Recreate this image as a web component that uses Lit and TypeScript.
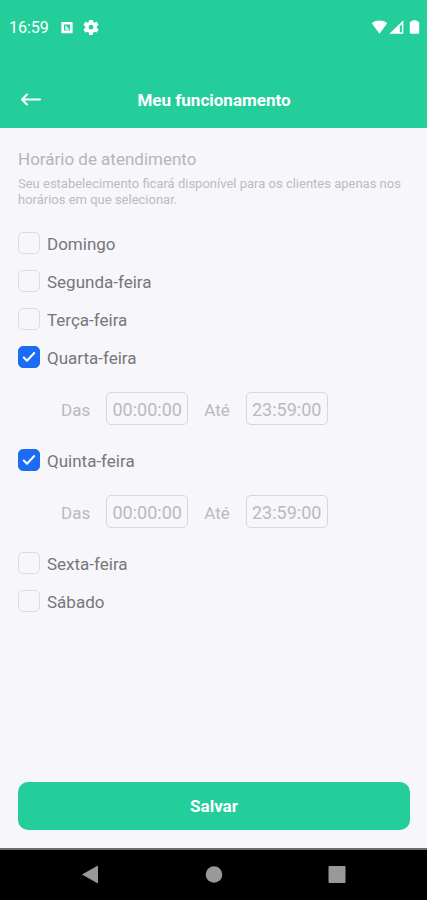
import { LitElement, html, css, nothing } from "lit";
import { customElement, state } from "lit/decorators.js";

interface Day {
  id: string;
  name: string;
  open: boolean;
  from: string;
  to: string;
}

const day = (id: string, name: string, open = false): Day => ({
  id,
  name,
  open,
  from: "00:00:00",
  to: "23:59:00",
});

@customElement("status-bar")
export class StatusBar extends LitElement {
  static styles = css`
    :host {
      display: flex;
      align-items: center;
      height: 56px;
      padding: 0 7px 0 9px;
      color: #fff;
      font: 16px/20px Roboto, sans-serif;
    }
    .time {
      margin-right: 10px;
    }
    .left {
      width: 16px;
      height: 16px;
      margin-right: 8px;
    }
    .space {
      flex: 1;
    }
    svg {
      display: block;
      fill: currentColor;
    }
  `;

  render() {
    return html`
      <span class="time">16:59</span>
      <svg class="left" viewBox="0 0 16 16">
        <path
          fill-rule="evenodd"
          d="M3 2h10q.6 0 .6.600v10q0 .6-.6.600H3q-.6 0-.6-.6v-10Q2.400 2 3 2zM5 4.600v6h6v-6z"
        />
        <path d="M6.300 5.200L10.600 9.800H6.300z" />
      </svg>
      <svg class="left" viewBox="2 3 20 20">
        <path
          d="M19.140 12.940c.04-.3.060-.61.060-.94 0-.32-.02-.64-.07-.94l2.030-1.580c.18-.14.230-.41.120-.61l-1.920-3.320c-.12-.22-.37-.29-.59-.22l-2.390.96c-.5-.38-1.030-.7-1.620-.94l-.36-2.540c-.04-.24-.24-.41-.48-.41h-3.840c-.24 0-.43.170-.47.410l-.36 2.540c-.59.240-1.130.570-1.620.940l-2.390-.96c-.22-.08-.47 0-.59.220L2.740 8.870c-.12.210-.08.470.120.610l2.030 1.580c-.05.300-.09.630-.09.940s.02.640.070.940l-2.030 1.580c-.18.140-.23.410-.12.610l1.920 3.320c.12.220.37.290.59.220l2.390-.96c.5.380 1.030.700 1.620.940l.36 2.540c.05.240.24.410.48.410h3.840c.24 0 .44-.17.470-.41l.36-2.540c.59-.24 1.130-.56 1.620-.94l2.390.96c.22.080.47 0 .59-.22l1.920-3.320c.12-.22.070-.47-.12-.61l-2.010-1.580zM12 15a3 3 0 1 1 0-6 3 3 0 0 1 0 6z"
        />
      </svg>
      <span class="space"></span>
      <svg width="49" height="16" viewBox="0 0 49 16">
        <path d="M0.800 3.300C3 1.200 5.500.5 8.500.5s5.500.700 7.700 2.800L8.500 13.800z" />
        <path
          fill-rule="evenodd"
          d="M18.300 13.800L32.300.3v13.500zM28.800 6.200v6h2.100V4.200z"
        />
        <path
          d="M41 1.500V1q0-.8.800-.8h3.400q.8 0 .8.800v.5h1q1.200 0 1.200 1.200v9.900q0 1.200-1.200 1.200h-7q-1.200 0-1.200-1.200V2.700q0-1.200 1.200-1.200z"
        />
      </svg>
    `;
  }
}

@customElement("system-nav")
export class SystemNav extends LitElement {
  static styles = css`
    :host {
      display: flex;
      justify-content: center;
      align-items: center;
      gap: 98px;
      height: 52px;
      border-top: 2px solid #6c6c6f;
      box-sizing: border-box;
      background: #000;
    }
    button {
      padding: 0;
      border: 0;
      background: none;
      color: #999;
    }
    svg {
      display: block;
      width: 26px;
      height: 24px;
      fill: currentColor;
    }
  `;

  render() {
    return html`
      <button aria-label="Voltar">
        <svg viewBox="0 0 26 24"><path d="M5 11.500L20 3q1-.5 1 .5v16q0 1-1 .5z" /></svg>
      </button>
      <button aria-label="Início">
        <svg viewBox="0 0 26 24"><circle cx="13" cy="11.500" r="8.300" /></svg>
      </button>
      <button aria-label="Recentes">
        <svg viewBox="0 0 26 24"><rect x="3.500" y="3" width="17" height="17" rx="1" /></svg>
      </button>
    `;
  }
}

@customElement("app-root")
export class AppRoot extends LitElement {
  static styles = css`
    :host {
      display: flex;
      flex-direction: column;
      min-height: 100vh;
      background: #f6f6fb;
      color: #77777a;
      font: 17px/22px Roboto, sans-serif;
    }
    header {
      background: #23ce9b;
      color: #fff;
    }
    .bar {
      display: grid;
      grid-template-columns: 24px 1fr 24px;
      align-items: center;
      height: 56px;
      padding: 0 18px 0 19px;
      margin-top: 16px;
    }
    h1 {
      margin: 0;
      text-align: center;
      font-size: 17px;
      font-weight: 700;
    }
    button {
      border: 0;
      padding: 0;
      color: inherit;
      font: inherit;
      cursor: pointer;
    }
    .back {
      background: none;
    }
    .back svg {
      display: block;
      width: 24px;
      height: 24px;
    }
    .stroke {
      fill: none;
      stroke: #fff;
      stroke-width: 2;
      stroke-linecap: round;
      stroke-linejoin: round;
    }
    main {
      flex: 1;
      display: flex;
      flex-direction: column;
      padding: 20px 17px 18px 18px;
    }
    h2 {
      margin: 0 0 6px;
      color: #b5b5b9;
      font-size: 17px;
      font-weight: 400;
    }
    .hint {
      margin: 0 0 24px;
      color: #bcbcc0;
      font-size: 13px;
      line-height: 16px;
    }
    .days {
      display: flex;
      flex-direction: column;
      gap: 16px;
      margin-bottom: 32px;
    }
    .day {
      display: flex;
      align-items: center;
      gap: 7px;
      height: 22px;
    }
    .box {
      display: grid;
    }
    .box > * {
      grid-area: 1 / 1;
    }
    .box input {
      appearance: none;
      width: 22px;
      height: 22px;
      margin: 0;
      border: 1px solid #dcdce1;
      border-radius: 5px;
    }
    .box input:checked {
      border-color: #1a6cf5;
      background: #1a6cf5;
    }
    .box svg {
      width: 22px;
      height: 22px;
      pointer-events: none;
    }
    .day label {
      padding-top: 2px;
    }
    .hours {
      display: flex;
      align-items: center;
      gap: 16px;
      margin: 8px 0 8px 43px;
      color: #bababe;
    }
    .hours label {
      display: flex;
      align-items: center;
      gap: 16px;
    }
    .hours input {
      box-sizing: border-box;
      width: 82px;
      height: 33px;
      padding: 2px 0 0;
      border: 1px solid #d6d6db;
      border-radius: 5px;
      background: none;
      color: inherit;
      font: inherit;
      font-size: 18px;
      text-align: center;
    }
    .caption {
      padding-top: 2px;
    }
    .save {
      height: 48px;
      margin-top: auto;
      border-radius: 10px;
      background: #23ce9b;
      color: #fff;
      font-weight: 700;
    }
  `;

  @state() private days: Day[] = [
    day("dom", "Domingo"),
    day("seg", "Segunda-feira"),
    day("ter", "Terça-feira"),
    day("qua", "Quarta-feira", true),
    day("qui", "Quinta-feira", true),
    day("sex", "Sexta-feira"),
    day("sab", "Sábado"),
  ];

  private toggle(id: string) {
    this.days = this.days.map((d) => (d.id === id ? { ...d, open: !d.open } : d));
  }

  private renderDay(d: Day) {
    return html`
      <div class="day">
        <span class="box">
          <input type="checkbox" id=${d.id} .checked=${d.open} @change=${() => this.toggle(d.id)} />
          ${d.open
            ? html`<svg viewBox="0 0 22 22"><path class="stroke" d="M5.800 11.500l3.200 3.200 7.200-7.700" /></svg>`
            : nothing}
        </span>
        <label for=${d.id}>${d.name}</label>
      </div>
      ${d.open
        ? html`<div class="hours">
            <label><span class="caption">Das</span><input type="text" .value=${d.from} /></label>
            <label><span class="caption">Até</span><input type="text" .value=${d.to} /></label>
          </div>`
        : nothing}
    `;
  }

  render() {
    return html`
      <header>
        <status-bar></status-bar>
        <div class="bar">
          <button class="back" aria-label="Voltar">
            <svg class="stroke" viewBox="0 0 24 24"><path d="M21 11.500H4M8 6.500l-5 5 5 5" /></svg>
          </button>
          <h1>Meu funcionamento</h1>
        </div>
      </header>
      <main>
        <h2>Horário de atendimento</h2>
        <p class="hint">
          Seu estabelecimento ficará disponível para os clientes apenas nos horários em que selecionar.
        </p>
        <div class="days">${this.days.map((d) => this.renderDay(d))}</div>
        <button class="save">Salvar</button>
      </main>
      <system-nav></system-nav>
    `;
  }
}
